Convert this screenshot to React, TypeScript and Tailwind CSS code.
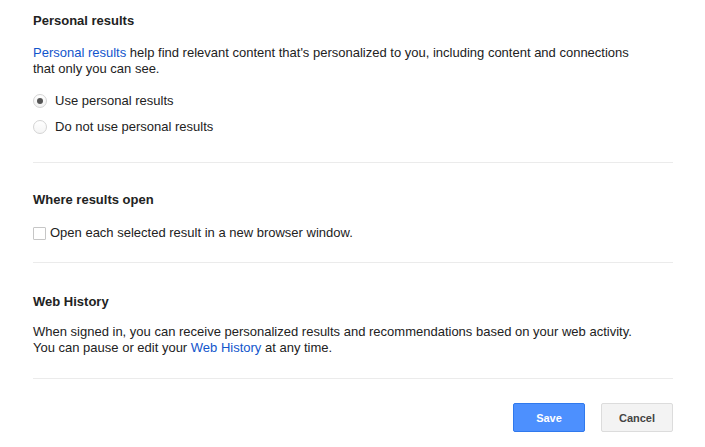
export default function App() {
  return (
    <div
      className="w-[705px] h-[447px] bg-white text-[#222] text-[13px] leading-4"
      style={{ fontFamily: '"Liberation Sans", Arial, sans-serif' }}
    >
      <div className="ml-[33px] w-[640px] pt-[13px]">
        {/* Personal results */}
        <h2 className="font-bold text-[13px] leading-4">Personal results</h2>
        <p className="mt-4">
          <a className="text-[#15c] cursor-pointer">Personal results</a> help find relevant
          content that's personalized to you, including content and connections
          <br />
          that only you can see.
        </p>
        <div className="mt-[11px]">
          <label className="flex h-[26px] items-center gap-2">
            <span className="flex h-[14px] w-[14px] items-center justify-center rounded-full border border-[#d4d4d4] bg-gradient-to-b from-white to-[#f1f1f1]">
              <span className="h-[6px] w-[6px] rounded-full bg-[#555]" />
            </span>
            <span>Use personal results</span>
          </label>
          <label className="flex h-[26px] items-center gap-2">
            <span className="h-[14px] w-[14px] rounded-full border border-[#d4d4d4] bg-gradient-to-b from-white to-[#f5f5f5]" />
            <span>Do not use personal results</span>
          </label>
        </div>

        <div className="mt-[22px] h-px bg-[#ebebeb]" />

        {/* Where results open */}
        <h2 className="mt-[29px] font-bold leading-4">Where results open</h2>
        <label className="mt-[15px] flex h-5 items-center gap-[4px]">
          <span className="h-[13px] w-[13px] rounded-[1px] border border-[#c6c6c6] bg-white" />
          <span>Open each selected result in a new browser window.</span>
        </label>

        <div className="mt-[19px] h-px bg-[#ebebeb]" />

        {/* Web History */}
        <h2 className="mt-[31px] font-bold leading-4">Web History</h2>
        <p className="mt-[14px]">
          When signed in, you can receive personalized results and recommendations based on
          your web activity.
          <br />
          You can pause or edit your <a className="text-[#15c] cursor-pointer">Web History</a> at
          any time.
        </p>

        <div className="mt-[22px] h-px bg-[#ebebeb]" />

        <div className="mt-[24px] flex justify-end gap-4">
          <button className="h-[29px] w-[72px] rounded-[2px] border border-[#3079ed] bg-[#4d90fe] text-[11px] font-bold text-white">
            Save
          </button>
          <button className="h-[29px] w-[72px] rounded-[2px] border border-[#dcdcdc] bg-[#f3f3f3] text-[11px] font-bold text-[#444]">
            Cancel
          </button>
        </div>
      </div>
    </div>
  );
}
